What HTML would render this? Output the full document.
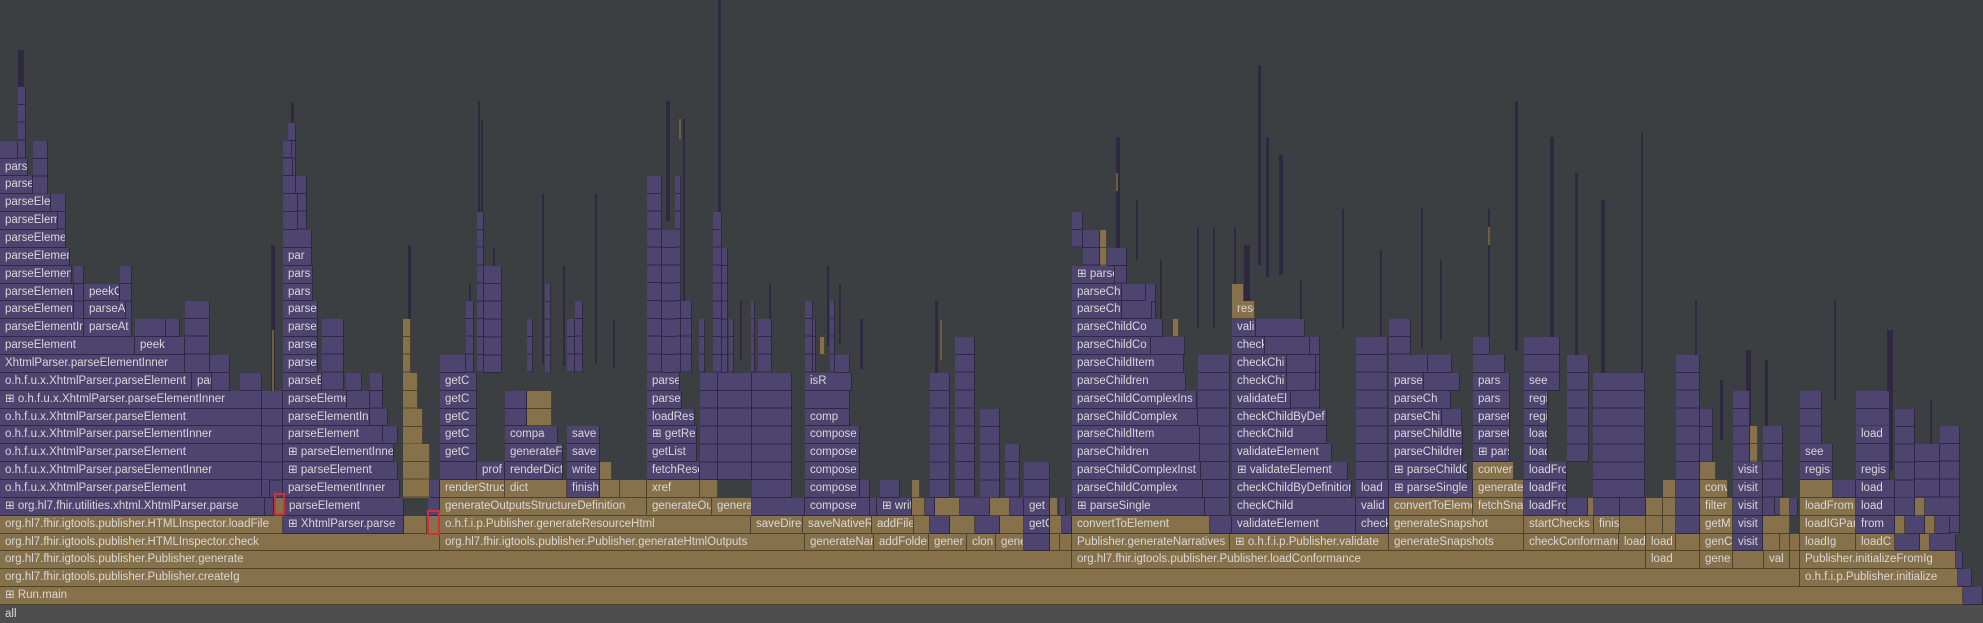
<!DOCTYPE html>
<html><head><meta charset="utf-8"><style>
body{margin:0;width:1983px;height:623px;background:#3c3f41;position:relative;overflow:hidden;font-family:"Liberation Sans","DejaVu Sans",sans-serif}
.b{position:absolute;box-sizing:border-box;height:17.86px;top:calc(605px - var(--r)*17.86px);border-right:1px solid #2e2940;border-bottom:1px solid #2e2940;overflow:hidden;white-space:nowrap;font-size:11.5px;line-height:17px;color:#d8d8d8;padding-left:5px;font-style:normal}
.p{background:#4e4470}
.g{background:#87714a;border-color:#4d4331}
.s{position:absolute;box-sizing:border-box;top:calc(605px - var(--r)*17.86px);height:calc(var(--n)*17.86px);border-right:1px solid #2e2940;background:repeating-linear-gradient(#4e4470 0 16.86px,#2e2940 16.86px 17.86px)}
.sg{position:absolute;box-sizing:border-box;top:calc(605px - var(--r)*17.86px);height:calc(var(--n)*17.86px);border-right:1px solid #4d4331;background:repeating-linear-gradient(#87714a 0 16.86px,#4d4331 16.86px 17.86px)}
.k{position:absolute;background:#2e2940}
.kg{position:absolute;background:#6e5c3a}
.red{position:absolute;border:2px solid #d0303c;box-sizing:border-box}
#all{position:absolute;left:0;top:605px;width:1983px;height:18px;background:#4e4e4e;color:#d8d8d8;font-size:11.5px;line-height:18px;padding-left:5px;box-sizing:border-box}
</style></head><body>

<!-- spikes (behind) -->
<div class="k" style="left:18px;top:50px;width:6px;height:60px"></div>
<div class="k" style="left:291px;top:102px;width:3px;height:60px"></div>
<div class="k" style="left:271px;top:245px;width:4px;height:260px"></div>
<div class="kg" style="left:272px;top:330px;width:2px;height:170px"></div>
<div class="k" style="left:408px;top:245px;width:3px;height:80px"></div>
<div class="k" style="left:469px;top:284px;width:2px;height:30px"></div>
<div class="k" style="left:478px;top:101px;width:2px;height:120px"></div>
<div class="k" style="left:481px;top:119px;width:2px;height:100px"></div>
<div class="k" style="left:493px;top:248px;width:2px;height:40px"></div>
<div class="k" style="left:542px;top:194px;width:2px;height:170px"></div>
<div class="k" style="left:563px;top:266px;width:2px;height:100px"></div>
<div class="k" style="left:595px;top:194px;width:2px;height:170px"></div>
<div class="k" style="left:613px;top:319px;width:2px;height:50px"></div>
<div class="k" style="left:666px;top:101px;width:4px;height:120px"></div>
<div class="k" style="left:683px;top:119px;width:2px;height:200px"></div>
<div class="kg" style="left:679px;top:119px;width:2px;height:20px"></div>
<div class="k" style="left:718px;top:0px;width:3px;height:220px"></div>
<div class="k" style="left:740px;top:301px;width:2px;height:60px"></div>
<div class="k" style="left:769px;top:284px;width:2px;height:60px"></div>
<div class="k" style="left:827px;top:266px;width:2px;height:80px"></div>
<div class="k" style="left:839px;top:284px;width:2px;height:60px"></div>
<div class="k" style="left:860px;top:319px;width:3px;height:50px"></div>
<div class="k" style="left:935px;top:301px;width:3px;height:80px"></div>
<div class="kg" style="left:940px;top:320px;width:2px;height:40px"></div>
<div class="k" style="left:1100px;top:240px;width:2px;height:80px"></div>
<div class="k" style="left:1116px;top:137px;width:4px;height:120px"></div>
<div class="kg" style="left:1116px;top:173px;width:2px;height:18px"></div>
<div class="k" style="left:1136px;top:200px;width:2px;height:60px"></div>
<div class="k" style="left:1160px;top:260px;width:2px;height:60px"></div>
<div class="k" style="left:1197px;top:227px;width:2px;height:100px"></div>
<div class="k" style="left:1213px;top:227px;width:2px;height:100px"></div>
<div class="k" style="left:1234px;top:227px;width:2px;height:60px"></div>
<div class="k" style="left:1244px;top:245px;width:6px;height:60px"></div>
<div class="k" style="left:1258px;top:65px;width:3px;height:200px"></div>
<div class="k" style="left:1266px;top:137px;width:3px;height:140px"></div>
<div class="k" style="left:1279px;top:155px;width:4px;height:120px"></div>
<div class="k" style="left:1300px;top:280px;width:2px;height:60px"></div>
<div class="k" style="left:1342px;top:209px;width:2px;height:120px"></div>
<div class="k" style="left:1380px;top:250px;width:2px;height:100px"></div>
<div class="k" style="left:1421px;top:209px;width:2px;height:140px"></div>
<div class="k" style="left:1440px;top:260px;width:2px;height:80px"></div>
<div class="k" style="left:1488px;top:209px;width:2px;height:150px"></div>
<div class="kg" style="left:1488px;top:227px;width:2px;height:18px"></div>
<div class="k" style="left:1515px;top:101px;width:3px;height:250px"></div>
<div class="k" style="left:1550px;top:137px;width:4px;height:200px"></div>
<div class="k" style="left:1575px;top:173px;width:3px;height:200px"></div>
<div class="k" style="left:1601px;top:200px;width:4px;height:180px"></div>
<div class="k" style="left:1641px;top:133px;width:2px;height:250px"></div>
<div class="k" style="left:1695px;top:300px;width:2px;height:120px"></div>
<div class="k" style="left:1720px;top:380px;width:3px;height:60px"></div>
<div class="k" style="left:1746px;top:350px;width:5px;height:120px"></div>
<div class="k" style="left:1765px;top:360px;width:3px;height:120px"></div>
<div class="k" style="left:1834px;top:300px;width:2px;height:100px"></div>
<div class="k" style="left:1887px;top:330px;width:6px;height:140px"></div>
<div class="k" style="left:1930px;top:400px;width:2px;height:80px"></div>

<!-- stacks -->
<div class="s" style="--r:26;--n:12;left:0;width:18px"></div>
<div class="s" style="--r:29;--n:15;left:18px;width:8px"></div>
<div class="s" style="--r:26;--n:12;left:33px;width:15px"></div>
<div class="s" style="--r:23;--n:9;left:51px;width:15px"></div>
<div class="s" style="--r:19;--n:5;left:74px;width:10px"></div>
<div class="s" style="--r:19;--n:5;left:120px;width:12px"></div>
<div class="s" style="--r:16;--n:2;left:166px;width:14px"></div>
<div class="s" style="--r:17;--n:4;left:185px;width:25px"></div>
<div class="s" style="--r:14;--n:1;left:210px;width:20px"></div>
<div class="s" style="--r:13;--n:6;left:240px;width:22px"></div>
<div class="s" style="--r:12;--n:6;left:262px;width:21px"></div>
<div class="s" style="--r:27;--n:6;left:288px;width:8px"></div>
<div class="s" style="--r:24;--n:4;left:296px;width:11px"></div>
<div class="s" style="--r:16;--n:4;left:322px;width:22px"></div>
<div class="s" style="--r:13;--n:2;left:346px;width:16px"></div>
<div class="s" style="--r:13;--n:3;left:370px;width:13px"></div>
<div class="sg" style="--r:16;--n:3;left:403px;width:8px"></div>
<div class="sg" style="--r:13;--n:2;left:403px;width:15px"></div>
<div class="sg" style="--r:11;--n:2;left:403px;width:20px"></div>
<div class="sg" style="--r:9;--n:3;left:403px;width:27px"></div>
<div class="s" style="--r:14;--n:1;left:440px;width:26px"></div>
<div class="s" style="--r:17;--n:4;left:466px;width:8px"></div>
<div class="s" style="--r:22;--n:9;left:477px;width:7px"></div>
<div class="s" style="--r:19;--n:6;left:484px;width:18px"></div>
<div class="s" style="--r:16;--n:3;left:527px;width:6px"></div>
<div class="s" style="--r:18;--n:5;left:545px;width:6px"></div>
<div class="s" style="--r:16;--n:3;left:567px;width:8px"></div>
<div class="s" style="--r:17;--n:4;left:575px;width:8px"></div>
<div class="s" style="--r:24;--n:11;left:647px;width:15px"></div>
<div class="s" style="--r:21;--n:8;left:662px;width:15px"></div>
<div class="s" style="--r:24;--n:11;left:675px;width:6px"></div>
<div class="s" style="--r:17;--n:4;left:681px;width:11px"></div>
<div class="s" style="--r:16;--n:3;left:699px;width:6px"></div>
<div class="s" style="--r:13;--n:6;left:700px;width:18px"></div>
<div class="s" style="--r:22;--n:9;left:713px;width:9px"></div>
<div class="s" style="--r:20;--n:7;left:722px;width:6px"></div>
<div class="s" style="--r:16;--n:3;left:729px;width:5px"></div>
<div class="s" style="--r:13;--n:6;left:718px;width:34px"></div>
<div class="s" style="--r:17;--n:4;left:751px;width:4px"></div>
<div class="s" style="--r:16;--n:3;left:758px;width:14px"></div>
<div class="s" style="--r:13;--n:7;left:752px;width:40px"></div>
<div class="s" style="--r:17;--n:4;left:805px;width:8px"></div>
<div class="s" style="--r:16;--n:3;left:813px;width:3px"></div>
<div class="sg" style="--r:15;--n:1;left:820px;width:5px"></div>
<div class="s" style="--r:17;--n:4;left:830px;width:5px"></div>
<div class="s" style="--r:14;--n:1;left:835px;width:15px"></div>
<div class="s" style="--r:13;--n:7;left:930px;width:20px"></div>
<div class="s" style="--r:15;--n:9;left:955px;width:20px"></div>
<div class="s" style="--r:11;--n:6;left:980px;width:20px"></div>
<div class="s" style="--r:9;--n:4;left:1005px;width:15px"></div>
<div class="s" style="--r:8;--n:5;left:1024px;width:26px"></div>
<div class="s" style="--r:22;--n:2;left:1072px;width:11px"></div>
<div class="s" style="--r:21;--n:2;left:1083px;width:17px"></div>
<div class="sg" style="--r:21;--n:2;left:1100px;width:7px"></div>
<div class="s" style="--r:20;--n:2;left:1107px;width:20px"></div>
<div class="s" style="--r:14;--n:7;left:1198px;width:32px"></div>
<div class="s" style="--r:18;--n:4;left:1146px;width:10px"></div>
<div class="sg" style="--r:18;--n:1;left:1232px;width:12px"></div>
<div class="s" style="--r:15;--n:4;left:1290px;width:30px"></div>
<div class="s" style="--r:15;--n:8;left:1356px;width:32px"></div>
<div class="s" style="--r:16;--n:2;left:1389px;width:22px"></div>
<div class="s" style="--r:15;--n:2;left:1473px;width:17px"></div>
<div class="s" style="--r:15;--n:2;left:1524px;width:36px"></div>
<div class="s" style="--r:14;--n:6;left:1567px;width:22px"></div>
<div class="s" style="--r:13;--n:7;left:1593px;width:52px"></div>
<div class="s" style="--r:14;--n:9;left:1676px;width:24px"></div>
<div class="s" style="--r:11;--n:3;left:1700px;width:13px"></div>
<div class="s" style="--r:12;--n:4;left:1733px;width:17px"></div>
<div class="sg" style="--r:10;--n:2;left:1750px;width:8px"></div>
<div class="s" style="--r:10;--n:5;left:1763px;width:20px"></div>
<div class="s" style="--r:12;--n:3;left:1800px;width:22px"></div>
<div class="s" style="--r:12;--n:3;left:1856px;width:34px"></div>
<div class="s" style="--r:11;--n:7;left:1895px;width:20px"></div>
<div class="s" style="--r:9;--n:5;left:1915px;width:25px"></div>
<div class="s" style="--r:10;--n:6;left:1940px;width:20px"></div>

<!-- row 1 -->
<i class="b g" style="--r:1;left:0;width:1963px">⊞ Run.main</i>
<i class="b p" style="--r:1;left:1963px;width:20px"></i>
<!-- row 2 -->
<i class="b g" style="--r:2;left:0;width:1800px">org.hl7.fhir.igtools.publisher.Publisher.createIg</i>
<i class="b g" style="--r:2;left:1800px;width:158px">o.h.f.i.p.Publisher.initialize</i>
<i class="b p" style="--r:2;left:1958px;width:14px"></i>
<!-- row 3 -->
<i class="b g" style="--r:3;left:0;width:1072px">org.hl7.fhir.igtools.publisher.Publisher.generate</i>
<i class="b g" style="--r:3;left:1072px;width:574px">org.hl7.fhir.igtools.publisher.Publisher.loadConformance</i>
<i class="b g" style="--r:3;left:1646px;width:54px">load</i>
<i class="b g" style="--r:3;left:1700px;width:33px">gene</i>
<i class="b g" style="--r:3;left:1733px;width:31px"></i>
<i class="b g" style="--r:3;left:1764px;width:26px">val</i>
<i class="b g" style="--r:3;left:1790px;width:10px"></i>
<i class="b g" style="--r:3;left:1800px;width:156px">Publisher.initializeFromIg</i>
<i class="b p" style="--r:3;left:1956px;width:7px"></i>
<!-- row 4 -->
<i class="b g" style="--r:4;left:0;width:440px">org.hl7.fhir.igtools.publisher.HTMLInspector.check</i>
<i class="b g" style="--r:4;left:440px;width:365px">org.hl7.fhir.igtools.publisher.Publisher.generateHtmlOutputs</i>
<i class="b g" style="--r:4;left:805px;width:69px">generateNarratives</i>
<i class="b g" style="--r:4;left:874px;width:55px">addFolder</i>
<i class="b g" style="--r:4;left:929px;width:38px">gener</i>
<i class="b g" style="--r:4;left:967px;width:29px">clon</i>
<i class="b g" style="--r:4;left:996px;width:28px">gene</i>
<i class="b p" style="--r:4;left:1024px;width:26px"></i>
<i class="b g" style="--r:4;left:1050px;width:10px"></i>
<i class="b g" style="--r:4;left:1060px;width:12px"></i>
<i class="b g" style="--r:4;left:1072px;width:158px">Publisher.generateNarratives</i>
<i class="b g" style="--r:4;left:1230px;width:159px">⊞ o.h.f.i.p.Publisher.validate</i>
<i class="b g" style="--r:4;left:1389px;width:135px">generateSnapshots</i>
<i class="b g" style="--r:4;left:1524px;width:95px">checkConformance</i>
<i class="b g" style="--r:4;left:1619px;width:27px">load</i>
<i class="b g" style="--r:4;left:1646px;width:30px">load</i>
<i class="b g" style="--r:4;left:1676px;width:24px"></i>
<i class="b g" style="--r:4;left:1700px;width:33px">genC</i>
<i class="b p" style="--r:4;left:1733px;width:30px">visit</i>
<i class="b g" style="--r:4;left:1763px;width:17px"></i>
<i class="b g" style="--r:4;left:1780px;width:10px"></i>
<i class="b g" style="--r:4;left:1790px;width:10px"></i>
<i class="b g" style="--r:4;left:1800px;width:56px">loadIg</i>
<i class="b g" style="--r:4;left:1856px;width:39px">loadC</i>
<i class="b p" style="--r:4;left:1895px;width:25px"></i>
<i class="b g" style="--r:4;left:1920px;width:10px"></i>
<i class="b p" style="--r:4;left:1930px;width:26px"></i>
<!-- row 5 -->
<i class="b g" style="--r:5;left:0;width:283px">org.hl7.fhir.igtools.publisher.HTMLInspector.loadFile</i>
<i class="b p" style="--r:5;left:283px;width:121px">⊞ XhtmlParser.parse</i>
<i class="b g" style="--r:5;left:404px;width:23px"></i>
<i class="b g" style="--r:5;left:427px;width:13px"></i>
<i class="b g" style="--r:5;left:440px;width:311px">o.h.f.i.p.Publisher.generateResourceHtml</i>
<i class="b g" style="--r:5;left:751px;width:52px">saveDirect</i>
<i class="b g" style="--r:5;left:803px;width:69px">saveNativeResource</i>
<i class="b g" style="--r:5;left:872px;width:42px">addFile</i>
<i class="b g" style="--r:5;left:914px;width:16px"></i>
<i class="b p" style="--r:5;left:930px;width:20px"></i>
<i class="b g" style="--r:5;left:950px;width:25px"></i>
<i class="b p" style="--r:5;left:975px;width:25px"></i>
<i class="b g" style="--r:5;left:1000px;width:24px"></i>
<i class="b p" style="--r:5;left:1024px;width:26px">getC</i>
<i class="b g" style="--r:5;left:1050px;width:12px"></i>
<i class="b p" style="--r:5;left:1062px;width:10px"></i>
<i class="b g" style="--r:5;left:1072px;width:138px">convertToElement</i>
<i class="b p" style="--r:5;left:1210px;width:22px"></i>
<i class="b p" style="--r:5;left:1232px;width:124px">validateElement</i>
<i class="b p" style="--r:5;left:1356px;width:33px">check</i>
<i class="b g" style="--r:5;left:1389px;width:135px">generateSnapshot</i>
<i class="b g" style="--r:5;left:1524px;width:70px">startChecks</i>
<i class="b g" style="--r:5;left:1594px;width:26px">finish</i>
<i class="b g" style="--r:5;left:1620px;width:26px"></i>
<i class="b g" style="--r:5;left:1646px;width:17px"></i>
<i class="b g" style="--r:5;left:1663px;width:13px"></i>
<i class="b p" style="--r:5;left:1676px;width:24px"></i>
<i class="b g" style="--r:5;left:1700px;width:33px">getM</i>
<i class="b p" style="--r:5;left:1733px;width:30px">visit</i>
<i class="b g" style="--r:5;left:1763px;width:27px"></i>
<i class="b g" style="--r:5;left:1800px;width:56px">loadIGParam</i>
<i class="b p" style="--r:5;left:1856px;width:39px">from</i>
<i class="b g" style="--r:5;left:1895px;width:10px"></i>
<i class="b p" style="--r:5;left:1905px;width:20px"></i>
<i class="b g" style="--r:5;left:1925px;width:10px"></i>
<i class="b p" style="--r:5;left:1935px;width:15px"></i>
<!-- row 6 -->
<i class="b p" style="--r:6;left:0;width:265px">⊞ org.hl7.fhir.utilities.xhtml.XhtmlParser.parse</i>
<i class="b p" style="--r:6;left:265px;width:9px"></i>
<i class="b g" style="--r:6;left:274px;width:10px"></i>
<i class="b p" style="--r:6;left:284px;width:120px">parseElement</i>
<i class="b p" style="--r:6;left:428px;width:12px"></i>
<i class="b g" style="--r:6;left:440px;width:207px">generateOutputsStructureDefinition</i>
<i class="b g" style="--r:6;left:647px;width:65px">generateOutputs</i>
<i class="b g" style="--r:6;left:712px;width:40px">generate</i>
<i class="b p" style="--r:6;left:752px;width:53px"></i>
<i class="b p" style="--r:6;left:805px;width:65px">compose</i>
<i class="b p" style="--r:6;left:870px;width:7px"></i>
<i class="b p" style="--r:6;left:877px;width:35px">⊞ write</i>
<i class="b g" style="--r:6;left:912px;width:13px"></i>
<i class="b p" style="--r:6;left:925px;width:10px"></i>
<i class="b g" style="--r:6;left:935px;width:25px"></i>
<i class="b p" style="--r:6;left:960px;width:30px"></i>
<i class="b g" style="--r:6;left:990px;width:20px"></i>
<i class="b p" style="--r:6;left:1010px;width:14px"></i>
<i class="b p" style="--r:6;left:1024px;width:26px">get</i>
<i class="b g" style="--r:6;left:1050px;width:8px"></i>
<i class="b p" style="--r:6;left:1060px;width:6px"></i>
<i class="b p" style="--r:6;left:1072px;width:133px">⊞ parseSingle</i>
<i class="b p" style="--r:6;left:1205px;width:25px"></i>
<i class="b p" style="--r:6;left:1232px;width:124px">checkChild</i>
<i class="b p" style="--r:6;left:1356px;width:33px">valid</i>
<i class="b g" style="--r:6;left:1389px;width:84px">convertToElement</i>
<i class="b g" style="--r:6;left:1473px;width:51px">fetchSnapshot</i>
<i class="b p" style="--r:6;left:1524px;width:43px">loadFrom</i>
<i class="b p" style="--r:6;left:1567px;width:21px"></i>
<i class="b g" style="--r:6;left:1588px;width:5px"></i>
<i class="b p" style="--r:6;left:1593px;width:27px"></i>
<i class="b p" style="--r:6;left:1620px;width:26px"></i>
<i class="b g" style="--r:6;left:1646px;width:17px"></i>
<i class="b g" style="--r:6;left:1663px;width:13px"></i>
<i class="b p" style="--r:6;left:1676px;width:24px"></i>
<i class="b g" style="--r:6;left:1700px;width:33px">filter</i>
<i class="b p" style="--r:6;left:1733px;width:30px">visit</i>
<i class="b p" style="--r:6;left:1763px;width:12px"></i>
<i class="b g" style="--r:6;left:1780px;width:10px"></i>
<i class="b p" style="--r:6;left:1790px;width:8px"></i>
<i class="b g" style="--r:6;left:1800px;width:56px">loadFrom</i>
<i class="b p" style="--r:6;left:1856px;width:39px">load</i>
<i class="b p" style="--r:6;left:1895px;width:20px"></i>
<i class="b g" style="--r:6;left:1915px;width:10px"></i>
<i class="b p" style="--r:6;left:1925px;width:35px"></i>
<!-- row 7 -->
<i class="b p" style="--r:7;left:0;width:262px">o.h.f.u.x.XhtmlParser.parseElement</i>
<i class="b p" style="--r:7;left:262px;width:8px"></i>
<i class="b p" style="--r:7;left:283px;width:117px">parseElementInner</i>
<i class="b p" style="--r:7;left:430px;width:10px"></i>
<i class="b g" style="--r:7;left:440px;width:65px">renderStructure</i>
<i class="b g" style="--r:7;left:505px;width:62px">dict</i>
<i class="b p" style="--r:7;left:567px;width:33px">finish</i>
<i class="b g" style="--r:7;left:600px;width:20px"></i>
<i class="b g" style="--r:7;left:620px;width:27px"></i>
<i class="b g" style="--r:7;left:647px;width:53px">xref</i>
<i class="b g" style="--r:7;left:700px;width:18px"></i>
<i class="b p" style="--r:7;left:805px;width:55px">compose</i>
<i class="b p" style="--r:7;left:860px;width:10px"></i>
<i class="b p" style="--r:7;left:880px;width:20px"></i>
<i class="b g" style="--r:7;left:912px;width:8px"></i>
<i class="b p" style="--r:7;left:1072px;width:131px">parseChildComplex</i>
<i class="b p" style="--r:7;left:1203px;width:27px"></i>
<i class="b p" style="--r:7;left:1232px;width:120px">checkChildByDefinition</i>
<i class="b p" style="--r:7;left:1356px;width:33px">load</i>
<i class="b p" style="--r:7;left:1389px;width:84px">⊞ parseSingle</i>
<i class="b g" style="--r:7;left:1473px;width:51px">generate</i>
<i class="b p" style="--r:7;left:1524px;width:43px">loadFrom</i>
<i class="b g" style="--r:7;left:1663px;width:13px"></i>
<i class="b g" style="--r:7;left:1700px;width:28px">conv</i>
<i class="b p" style="--r:7;left:1733px;width:30px">visit</i>
<i class="b g" style="--r:7;left:1800px;width:33px"></i>
<i class="b p" style="--r:7;left:1833px;width:23px"></i>
<i class="b p" style="--r:7;left:1856px;width:39px">load</i>
<!-- row 8 -->
<i class="b p" style="--r:8;left:0;width:262px">o.h.f.u.x.XhtmlParser.parseElementInner</i>
<i class="b p" style="--r:8;left:283px;width:115px">⊞ parseElement</i>
<i class="b p" style="--r:8;left:440px;width:37px"></i>
<i class="b p" style="--r:8;left:477px;width:28px">prof</i>
<i class="b p" style="--r:8;left:505px;width:58px">renderDict</i>
<i class="b p" style="--r:8;left:567px;width:33px">write</i>
<i class="b g" style="--r:8;left:600px;width:12px"></i>
<i class="b p" style="--r:8;left:647px;width:53px">fetchResource</i>
<i class="b p" style="--r:8;left:805px;width:55px">compose</i>
<i class="b p" style="--r:8;left:1072px;width:129px">parseChildComplexInst</i>
<i class="b p" style="--r:8;left:1232px;width:116px">⊞ validateElement</i>
<i class="b p" style="--r:8;left:1389px;width:79px">⊞ parseChildC</i>
<i class="b g" style="--r:8;left:1473px;width:41px">convert</i>
<i class="b p" style="--r:8;left:1524px;width:43px">loadFrom</i>
<i class="b g" style="--r:8;left:1700px;width:16px"></i>
<i class="b p" style="--r:8;left:1733px;width:30px">visit</i>
<i class="b p" style="--r:8;left:1800px;width:33px">regis</i>
<i class="b p" style="--r:8;left:1856px;width:34px">regis</i>
<!-- row 9 -->
<i class="b p" style="--r:9;left:0;width:262px">o.h.f.u.x.XhtmlParser.parseElement</i>
<i class="b p" style="--r:9;left:283px;width:111px">⊞ parseElementInner</i>
<i class="b p" style="--r:9;left:440px;width:37px">getC</i>
<i class="b p" style="--r:9;left:505px;width:58px">generateF</i>
<i class="b p" style="--r:9;left:567px;width:33px">save</i>
<i class="b p" style="--r:9;left:647px;width:50px">getList</i>
<i class="b p" style="--r:9;left:805px;width:55px">compose</i>
<i class="b p" style="--r:9;left:1072px;width:128px">parseChildren</i>
<i class="b p" style="--r:9;left:1232px;width:100px">validateElement</i>
<i class="b p" style="--r:9;left:1389px;width:74px">parseChildren</i>
<i class="b p" style="--r:9;left:1473px;width:37px">⊞ parse</i>
<i class="b p" style="--r:9;left:1524px;width:24px">load</i>
<i class="b p" style="--r:9;left:1800px;width:33px">see</i>
<i class="b p" style="--r:9;left:1856px;width:34px"></i>
<!-- row 10 -->
<i class="b p" style="--r:10;left:0;width:262px">o.h.f.u.x.XhtmlParser.parseElementInner</i>
<i class="b p" style="--r:10;left:283px;width:100px">parseElement</i>
<i class="b p" style="--r:10;left:383px;width:15px"></i>
<i class="b p" style="--r:10;left:440px;width:37px">getC</i>
<i class="b p" style="--r:10;left:505px;width:53px">compa</i>
<i class="b p" style="--r:10;left:567px;width:33px">save</i>
<i class="b p" style="--r:10;left:647px;width:50px">⊞ getRes</i>
<i class="b p" style="--r:10;left:805px;width:55px">compose</i>
<i class="b p" style="--r:10;left:1072px;width:128px">parseChildItem</i>
<i class="b p" style="--r:10;left:1232px;width:95px">checkChild</i>
<i class="b p" style="--r:10;left:1389px;width:74px">parseChildItem</i>
<i class="b p" style="--r:10;left:1473px;width:37px">parseC</i>
<i class="b p" style="--r:10;left:1524px;width:24px">load</i>
<i class="b p" style="--r:10;left:1856px;width:34px">load</i>
<!-- row 11 -->
<i class="b p" style="--r:11;left:0;width:262px">o.h.f.u.x.XhtmlParser.parseElement</i>
<i class="b p" style="--r:11;left:283px;width:87px">parseElementIn</i>
<i class="b p" style="--r:11;left:370px;width:18px"></i>
<i class="b p" style="--r:11;left:440px;width:37px">getC</i>
<i class="b p" style="--r:11;left:505px;width:22px"></i>
<i class="b g" style="--r:11;left:527px;width:25px"></i>
<i class="b p" style="--r:11;left:647px;width:48px">loadRes</i>
<i class="b p" style="--r:11;left:805px;width:45px">comp</i>
<i class="b p" style="--r:11;left:1072px;width:126px">parseChildComplex</i>
<i class="b p" style="--r:11;left:1232px;width:95px">checkChildByDef</i>
<i class="b p" style="--r:11;left:1389px;width:53px">parseChi</i>
<i class="b p" style="--r:11;left:1442px;width:20px"></i>
<i class="b p" style="--r:11;left:1473px;width:37px">parseC</i>
<i class="b p" style="--r:11;left:1524px;width:24px">regi</i>
<!-- row 12 -->
<i class="b p" style="--r:12;left:0;width:262px">⊞ o.h.f.u.x.XhtmlParser.parseElementInner</i>
<i class="b p" style="--r:12;left:283px;width:64px">parseEleme</i>
<i class="b p" style="--r:12;left:347px;width:23px"></i>
<i class="b p" style="--r:12;left:440px;width:37px">getC</i>
<i class="b p" style="--r:12;left:505px;width:22px"></i>
<i class="b g" style="--r:12;left:527px;width:25px"></i>
<i class="b p" style="--r:12;left:647px;width:35px">parse</i>
<i class="b p" style="--r:12;left:805px;width:45px"></i>
<i class="b p" style="--r:12;left:1072px;width:125px">parseChildComplexIns</i>
<i class="b p" style="--r:12;left:1232px;width:59px">validateEl</i>
<i class="b p" style="--r:12;left:1389px;width:62px">parseCh</i>
<i class="b p" style="--r:12;left:1473px;width:37px">pars</i>
<i class="b p" style="--r:12;left:1524px;width:24px">regi</i>
<!-- row 13 -->
<i class="b p" style="--r:13;left:0;width:192px">o.h.f.u.x.XhtmlParser.parseElement</i>
<i class="b p" style="--r:13;left:192px;width:20px">par</i>
<i class="b p" style="--r:13;left:212px;width:18px"></i>
<i class="b p" style="--r:13;left:283px;width:39px">parseE</i>
<i class="b p" style="--r:13;left:440px;width:37px">getC</i>
<i class="b p" style="--r:13;left:647px;width:33px">parse</i>
<i class="b p" style="--r:13;left:805px;width:47px">isR</i>
<i class="b p" style="--r:13;left:1072px;width:114px">parseChildren</i>
<i class="b p" style="--r:13;left:1232px;width:55px">checkChi</i>
<i class="b p" style="--r:13;left:1287px;width:29px"></i>
<i class="b p" style="--r:13;left:1389px;width:35px">parse</i>
<i class="b p" style="--r:13;left:1424px;width:36px"></i>
<i class="b p" style="--r:13;left:1473px;width:37px">pars</i>
<i class="b p" style="--r:13;left:1524px;width:36px">see</i>
<!-- row 14 -->
<i class="b p" style="--r:14;left:0;width:185px">XhtmlParser.parseElementInner</i>
<i class="b p" style="--r:14;left:185px;width:25px"></i>
<i class="b p" style="--r:14;left:283px;width:35px">parse</i>
<i class="b p" style="--r:14;left:1072px;width:112px">parseChildItem</i>
<i class="b p" style="--r:14;left:1232px;width:55px">checkChi</i>
<i class="b p" style="--r:14;left:1287px;width:29px"></i>
<i class="b p" style="--r:14;left:1389px;width:39px"></i>
<i class="b p" style="--r:14;left:1428px;width:24px"></i>
<i class="b p" style="--r:14;left:1473px;width:32px"></i>
<!-- row 15 -->
<i class="b p" style="--r:15;left:0;width:135px">parseElement</i>
<i class="b p" style="--r:15;left:135px;width:50px">peek</i>
<i class="b p" style="--r:15;left:283px;width:35px">parse</i>
<i class="b p" style="--r:15;left:1072px;width:79px">parseChildCo</i>
<i class="b p" style="--r:15;left:1151px;width:34px"></i>
<i class="b p" style="--r:15;left:1232px;width:33px">check</i>
<i class="b p" style="--r:15;left:1265px;width:45px"></i>
<!-- row 16 -->
<i class="b p" style="--r:16;left:0;width:84px">parseElementInner</i>
<i class="b p" style="--r:16;left:84px;width:48px">parseAt</i>
<i class="b p" style="--r:16;left:135px;width:31px"></i>
<i class="b p" style="--r:16;left:283px;width:35px">parse</i>
<i class="b p" style="--r:16;left:1072px;width:91px">parseChildCo</i>
<i class="b g" style="--r:16;left:1173px;width:5px"></i>
<i class="b p" style="--r:16;left:1232px;width:24px">vali</i>
<i class="b p" style="--r:16;left:1256px;width:49px"></i>
<!-- row 17 -->
<i class="b p" style="--r:17;left:0;width:74px">parseElement</i>
<i class="b p" style="--r:17;left:84px;width:42px">parseA</i>
<i class="b p" style="--r:17;left:283px;width:35px">parse</i>
<i class="b p" style="--r:17;left:1072px;width:50px">parseCh</i>
<i class="b p" style="--r:17;left:1122px;width:30px"></i>
<i class="b g" style="--r:17;left:1232px;width:23px">resc</i>
<!-- row 18 -->
<i class="b p" style="--r:18;left:0;width:74px">parseElement</i>
<i class="b p" style="--r:18;left:84px;width:36px">peekC</i>
<i class="b p" style="--r:18;left:283px;width:30px">pars</i>
<i class="b p" style="--r:18;left:1072px;width:50px">parseCh</i>
<i class="b p" style="--r:18;left:1122px;width:24px"></i>
<!-- row 19 -->
<i class="b p" style="--r:19;left:0;width:72px">parseElement</i>
<i class="b p" style="--r:19;left:283px;width:30px">pars</i>
<i class="b p" style="--r:19;left:1072px;width:43px">⊞ parse</i>
<!-- row 20-25 -->
<i class="b p" style="--r:20;left:0;width:70px">parseElement</i>
<i class="b p" style="--r:20;left:283px;width:29px">par</i>
<i class="b p" style="--r:21;left:0;width:66px">parseElement</i>
<i class="b p" style="--r:21;left:283px;width:29px"></i>
<i class="b p" style="--r:22;left:0;width:58px">parseElem</i>
<i class="b p" style="--r:22;left:283px;width:15px"></i>
<i class="b p" style="--r:23;left:0;width:51px">parseElem</i>
<i class="b p" style="--r:23;left:283px;width:15px"></i>
<i class="b p" style="--r:24;left:0;width:33px">parse</i>
<i class="b p" style="--r:24;left:283px;width:13px"></i>
<i class="b p" style="--r:25;left:0;width:28px">pars</i>
<i class="b p" style="--r:25;left:283px;width:10px"></i>
<i class="b p" style="--r:26;left:283px;width:9px"></i>

<div class="red" style="left:427px;top:510px;width:13px;height:25px"></div>
<div class="red" style="left:274px;top:493px;width:11px;height:22px"></div>

<div id="all">all</div>
</body></html>
